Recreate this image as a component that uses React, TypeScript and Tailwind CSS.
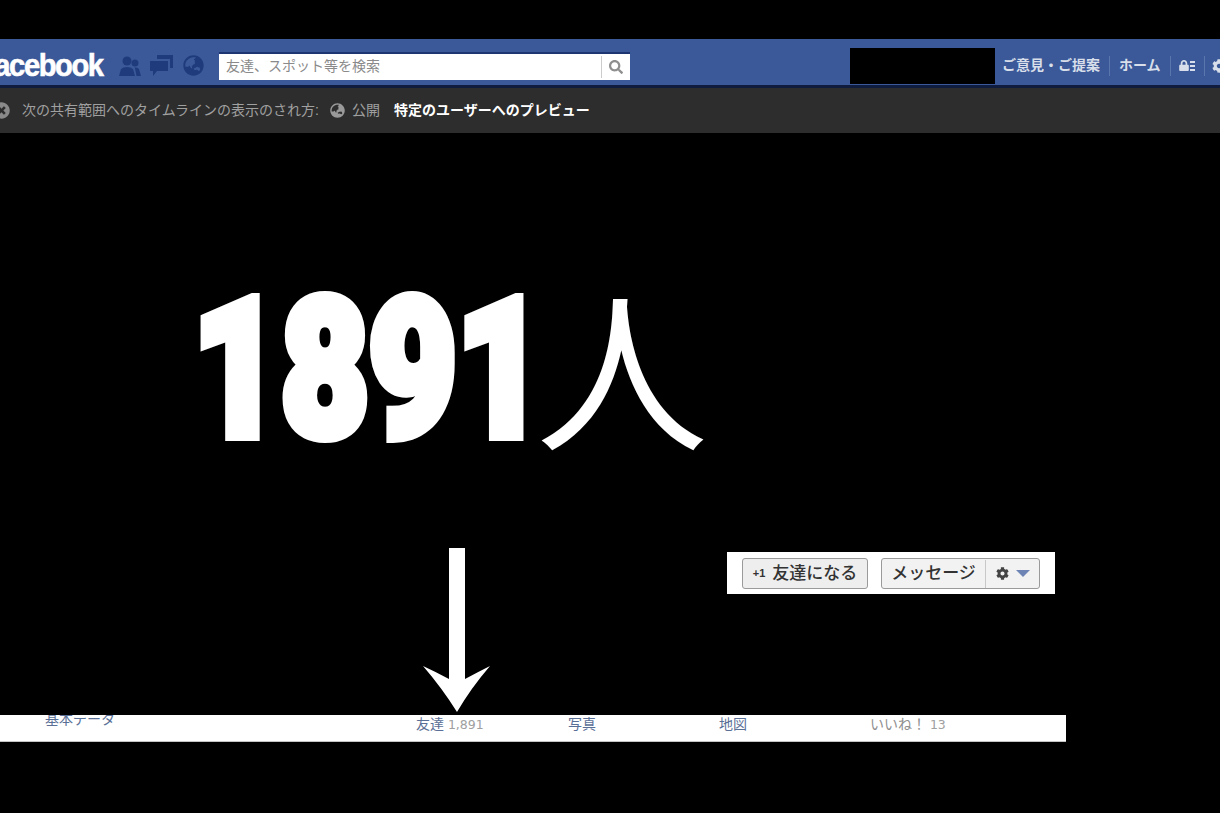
import React from 'react';
import { FaCog, FaGlobeAsia, FaLock, FaSearch, FaTimesCircle } from 'react-icons/fa';

const jp = 'font-["Liberation_Sans","Noto_Sans_CJK_JP",sans-serif]';

const FriendsIcon = () => (
  <svg width="22" height="22" viewBox="0 0 22 22" className="ml-[12px] shrink-0 text-[#1f3b7c]" fill="currentColor">
    <circle cx="8" cy="6" r="4.5" />
    <path d="M0 21L2 14Q4 12 8 12Q12 12 14 14L16 21Z" />
    <circle cx="16" cy="8" r="3.5" />
    <path d="M15.5 12.5Q19 12 20 14L22 21H17.5L16 13.5Z" />
  </svg>
);

const ChatIcon = () => (
  <svg width="23" height="21" viewBox="0 0 23 21" className="ml-[9px] shrink-0 text-[#1f3b7c]" fill="currentColor">
    <path d="M7 0H23V13H20V4H7Z" />
    <path d="M0 6H18V16H7L3 21V16H0Z" />
  </svg>
);

const TopBar = () => (
  <div className="h-[49px] pt-[7px] flex items-center bg-[#3b5998] border-b-[3px] border-[#0f1c3d] overflow-hidden whitespace-nowrap">
    <span className="ml-[-14px] w-[121px] shrink-0 text-[31px] leading-none font-bold tracking-[-1.5px] text-white font-['Liberation_Sans',sans-serif] origin-left scale-x-[0.94] [-webkit-text-stroke:0.6px_white]">
      facebook
    </span>
    <FriendsIcon />
    <ChatIcon />
    <FaGlobeAsia className="ml-[10px] shrink-0 w-[21px] h-[21px] text-[#1f3b7c]" />
    <div className="ml-[15px] shrink-0 w-[411px] h-[28px] bg-white border-t-2 border-[#1d3570] flex items-center justify-between">
      <span className={`pl-[7px] text-[14px] text-[#8a8a8a] ${jp}`}>友達、スポット等を検索</span>
      <div className="h-[22px] w-[29px] border-l border-[#cccccc] flex items-center justify-center">
        <FaSearch className="w-[14px] h-[14px] text-[#8f8f8f]" />
      </div>
    </div>
    <div className="ml-[220px] shrink-0 w-[145px] h-[36px] bg-black" />
    <span className={`ml-[7px] shrink-0 text-[14px] font-bold text-[#d8dfea] ${jp}`}>ご意見・ご提案</span>
    <div className="ml-[9px] shrink-0 h-[20px] w-px bg-[#5b76ad]" />
    <span className={`ml-[9px] shrink-0 text-[14px] font-bold text-[#d8dfea] ${jp}`}>ホーム</span>
    <div className="ml-[9px] shrink-0 h-[20px] w-px bg-[#5b76ad]" />
    <div className="ml-[8px] shrink-0 flex items-center gap-px">
      <FaLock className="w-[10px] h-[11px] text-[#d8dfea]" />
      <div className="flex flex-col gap-[2px]">
        <div className="w-[5px] h-[2px] bg-[#d8dfea]" />
        <div className="w-[5px] h-[2px] bg-[#d8dfea]" />
        <div className="w-[5px] h-[2px] bg-[#d8dfea]" />
      </div>
    </div>
    <div className="ml-[9px] shrink-0 h-[20px] w-px bg-[#5b76ad]" />
    <FaCog className="ml-[7px] shrink-0 w-[14px] h-[14px] text-[#d8dfea]" />
  </div>
);

const PreviewBar = () => (
  <div className="h-[45px] flex items-center bg-[#2d2d2d] whitespace-nowrap overflow-hidden">
    <FaTimesCircle className="ml-[-7px] w-[17px] h-[17px] text-[#8a8a8a]" />
    <span className={`ml-[12px] text-[14px] text-[#a0a0a0] ${jp}`}>次の共有範囲へのタイムラインの表示のされ方:</span>
    <FaGlobeAsia className="ml-[11px] w-[15px] h-[15px] text-[#9a9a9a]" />
    <span className={`ml-[7px] text-[14px] text-[#a0a0a0] ${jp}`}>公開</span>
    <span className={`ml-[14px] text-[14px] font-bold text-white ${jp}`}>特定のユーザーへのプレビュー</span>
  </div>
);

const Arrow = () => (
  <svg width="67" height="164" viewBox="0 0 67 164" className="shrink-0">
    <path d="M26 0H42V131Q55 124 67 118Q48 140 34 164Q19 140 0 118Q13 124 26 131Z" fill="#ffffff" />
  </svg>
);

const ActionButtons = () => (
  <div className={`ml-[237px] mt-[4px] w-[328px] h-[42px] bg-white flex items-center pl-[15px] ${jp}`}>
    <button className="w-[126px] h-[31px] pt-px flex items-center justify-center gap-[7px] rounded-[3px] border border-[#9a9a9a] bg-[#eeeeee] text-[17px] font-medium text-[#333333]">
      <span className="text-[11px] font-bold">+1</span>
      友達になる
    </button>
    <div className="ml-[13px] w-[159px] h-[31px] pt-px flex items-center rounded-[3px] border border-[#9a9a9a] bg-[#f2f2f2] text-[17px] font-medium text-[#333333]">
      <span className="w-[103px] text-center">メッセージ</span>
      <div className="h-full flex-1 border-l border-[#c8c8c8] flex items-center justify-center gap-[7px]">
        <FaCog className="w-[13px] h-[13px] text-[#444444]" />
        <div className="w-0 h-0 border-x-[7px] border-x-transparent border-t-[7px] border-t-[#6d84b4]" />
      </div>
    </div>
  </div>
);

const TabStrip = () => (
  <div className={`w-[1066px] h-[27px] pb-[8px] bg-white border-b border-[#c4c4c4] flex items-center overflow-hidden whitespace-nowrap text-[14px] text-[#5a6f96] ${jp}`}>
    <span className="w-[416px] pl-[45px] mt-[-10px]">基本データ</span>
    <span className="w-[152px]">
      友達 <span className="text-[#a0a0a0] font-['DejaVu_Sans',sans-serif] text-[12.5px]">1,891</span>
    </span>
    <span className="w-[151px]">写真</span>
    <span className="w-[151px]">地図</span>
    <span className="text-[#8f8f8f]">
      いいね！ <span className="font-['DejaVu_Sans',sans-serif] text-[12.5px] text-[#a0a0a0]">13</span>
    </span>
  </div>
);

export default function App() {
  return (
    <div className="w-[1220px] h-[813px] bg-black overflow-hidden pt-[39px]">
      <TopBar />
      <PreviewBar />
      <div className="h-[415px] pl-[193px] pt-[157px] flex items-start text-white">
        <div className="w-[343px] h-[160px] shrink-0">
          <span className="block origin-left scale-x-[0.79] text-[192px] leading-[160px] font-black whitespace-nowrap font-['Roboto',sans-serif] [-webkit-text-stroke:12px_white]">
            1891
          </span>
        </div>
        <span className="mt-[-7px] text-[172px] leading-[160px] font-normal font-['Noto_Sans_CJK_JP',sans-serif]">人</span>
      </div>
      <div className="h-[167px] pl-[423px] flex items-start">
        <Arrow />
        <ActionButtons />
      </div>
      <TabStrip />
    </div>
  );
}
